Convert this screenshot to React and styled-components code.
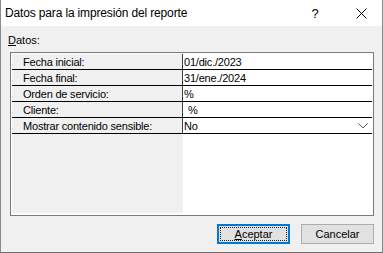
import React from 'react'
import styled, { createGlobalStyle } from 'styled-components'

const GlobalStyle = createGlobalStyle`
  html, body {
    margin: 0;
    padding: 0;
    background: #f0f0f0;
  }
  body {
    font-family: "Liberation Sans", Arial, sans-serif;
    color: #000;
  }
`;

const Window = styled.div`
  width: 383px;
  height: 253px;
  box-sizing: border-box;
  display: flex;
  flex-direction: column;
  background: #f0f0f0;
  border-left: 1px solid #8a8a8a;
  border-right: 1px solid #8a8a8a;
  border-bottom: 1px solid #6e6e6e;
`;

const TitleBar = styled.div`
  height: 26px;
  flex: none;
  display: flex;
  align-items: center;
  background: #fff;
  padding-left: 4px;
`;

const Title = styled.div`
  flex: 1;
  font-size: 12px;
  letter-spacing: -0.15px;
  margin-top: -1px;
`;

const TitleButton = styled.div`
  width: ${p => p.w}px;
  height: 26px;
  display: flex;
  align-items: center;
  justify-content: center;
  font-size: 13px;
`;

const Body = styled.div`
  flex: 1;
  display: flex;
  flex-direction: column;
  padding: 8px 8px 0 9px;
`;

const GroupLabel = styled.div`
  font-size: 11px;
  height: 18px;
  margin-left: -2px;
  u { text-decoration: underline; }
`;

const Grid = styled.div`
  width: 364px;
  height: 164px;
  box-sizing: border-box;
  border: 1px solid #7a7a7a;
  background: #fff;
  padding: 1px 1px 2px 1px;
  display: flex;
  flex-direction: column;
`;

const Row = styled.div`
  display: flex;
  height: 16px;
  box-sizing: border-box;
  border-bottom: 1px solid #000;
  font-size: 11px;
  letter-spacing: -0.2px;
`;

const Filler = styled.div`
  display: flex;
  flex: 1;
`;

const LabelCell = styled.div`
  width: 171px;
  flex: none;
  box-sizing: border-box;
  background: #f0f0f0;
  border-right: 1px solid ${p => (p.empty ? '#f0f0f0' : '#3c3c3c')};
  padding-left: 11px;
  display: flex;
  align-items: center;
  white-space: nowrap;
`;

const ValueCell = styled.div`
  flex: 1;
  display: flex;
  align-items: center;
  padding-left: ${p => (p.indent ? 5 : 1)}px;
  padding-right: 4px;
  white-space: pre;
`;

const ValueText = styled.span`
  flex: 1;
`;

const Footer = styled.div`
  display: flex;
  justify-content: flex-end;
  gap: 11px;
  padding-top: 8px;
`;

const Button = styled.div`
  position: relative;
  width: 73px;
  height: 20px;
  box-sizing: border-box;
  display: flex;
  align-items: center;
  justify-content: center;
  font-size: 11px;
  background: #e1e1e1;
  border: 1px solid ${p => (p.primary ? '#0078d7' : '#adadad')};
  box-shadow: ${p => (p.primary ? 'inset 0 0 0 1px #0078d7' : 'none')};
  u { text-decoration: underline; }
  ${p => p.primary && `
    &::after {
      content: '';
      position: absolute;
      inset: 2px;
      border: 1px dotted #222;
    }
  `}
`;

const rows = [
  { label: 'Fecha inicial:', value: '01/dic./2023' },
  { label: 'Fecha final:', value: '31/ene./2024' },
  { label: 'Orden de servicio:', value: '%' },
  { label: 'Cliente:', value: '%', indent: true },
  { label: 'Mostrar contenido sensible:', value: 'No', dropdown: true },
];

const Chevron = () => (
  <svg width="10" height="6" viewBox="0 0 10 6">
    <polyline points="0.5,0.5 5,5 9.5,0.5" fill="none" stroke="#606060" strokeWidth="1" />
  </svg>
);

const CloseIcon = () => (
  <svg width="11" height="11" viewBox="0 0 11 11">
    <path d="M0.5 0.5 L10.5 10.5 M10.5 0.5 L0.5 10.5" stroke="#000" strokeWidth="1" />
  </svg>
);

export default function App() {
  return (
    <>
      <GlobalStyle />
      <Window>
        <TitleBar>
          <Title>Datos para la impresión del reporte</Title>
          <TitleButton w={50}>?</TitleButton>
          <TitleButton w={42}><CloseIcon /></TitleButton>
        </TitleBar>
        <Body>
          <GroupLabel><u>D</u>atos:</GroupLabel>
          <Grid>
            {rows.map(r => (
              <Row key={r.label}>
                <LabelCell>{r.label}</LabelCell>
                <ValueCell indent={r.indent}>
                  <ValueText>{r.value}</ValueText>
                  {r.dropdown && <Chevron />}
                </ValueCell>
              </Row>
            ))}
            <Filler>
              <LabelCell empty />
              <ValueCell />
            </Filler>
          </Grid>
          <Footer>
            <Button primary><span><u>A</u>ceptar</span></Button>
            <Button>Cancelar</Button>
          </Footer>
        </Body>
      </Window>
    </>
  );
}
